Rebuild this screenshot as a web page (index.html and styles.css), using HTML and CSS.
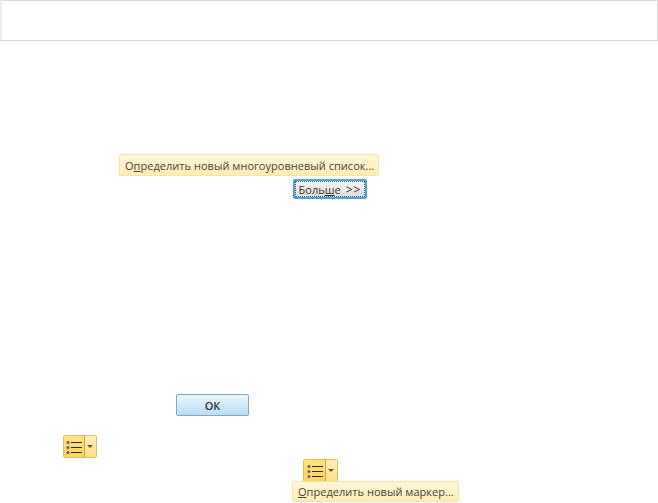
FILE: index.html
```html
<!DOCTYPE html>
<html lang="ru">
<head>
<meta charset="utf-8">
<title>Списки</title>
<link rel="stylesheet" href="styles.css">
</head>
<body>
<div class="banner"></div>
<div class="item menu menu-list"><span>О<u>п</u>ределить новый многоуровневый список...</span></div>
<button class="item btn btn-more"><span>Боль<u>ш</u>е</span><span class="chev">&gt;&gt;</span></button>
<button class="item btn btn-ok">ОК</button>
<div class="item split split-a">
  <span class="split-main"><svg width="16" height="14" viewBox="0 0 16 14"><g fill="#5a6478"><circle cx="2" cy="2.5" r="1.5"/><circle cx="2" cy="7.5" r="1.5"/><circle cx="2" cy="12.5" r="1.5"/></g><g fill="#2a2a2a"><rect x="5" y="2" width="11" height="1"/><rect x="5" y="7" width="11" height="1"/><rect x="5" y="12" width="11" height="1"/></g></svg></span>
  <span class="split-arrow"></span>
</div>
<div class="item split split-b">
  <span class="split-main"><svg width="16" height="14" viewBox="0 0 16 14"><g fill="#5a6478"><circle cx="2" cy="2.5" r="1.5"/><circle cx="2" cy="7.5" r="1.5"/><circle cx="2" cy="12.5" r="1.5"/></g><g fill="#2a2a2a"><rect x="5" y="2" width="11" height="1"/><rect x="5" y="7" width="11" height="1"/><rect x="5" y="12" width="11" height="1"/></g></svg></span>
  <span class="split-arrow"></span>
</div>
<div class="item menu menu-marker"><span><u>О</u>пределить новый маркер...</span></div>
</body>
</html>
```
FILE: styles.css
```css
html, body { margin: 0; padding: 0; background: #fff; }
body { position: relative; width: 658px; height: 503px; overflow: hidden; font-family: "Open Sans", "Noto Sans", sans-serif; color: #444; }
.banner { box-sizing: border-box; height: 41px; border-top: 1px solid #dcdcdc; border-bottom: 1px solid #d8d8d8; border-left: 2px solid #ececec; border-right: 1px solid #dcdcdc; }
.item { position: absolute; box-sizing: border-box; }
.menu { display: flex; align-items: center; border: 1px solid #f4e2ac; border-radius: 2px; background: linear-gradient(#fff7d6, #ffeeb4); font-size: 11px; font-weight: 500; letter-spacing: 0.03px; white-space: nowrap; }
.menu-list { left: 119px; top: 154px; width: 260px; height: 22px; padding-left: 5px; }
.menu-marker { left: 292px; top: 481px; width: 167px; height: 21px; padding-left: 5px; }
.btn { display: flex; align-items: center; justify-content: center; gap: 5px; padding: 0; font-family: inherit; font-size: 11px; color: #333; border-radius: 2px; }
.chev { font-size: 12px; letter-spacing: 1px; }
.btn-more { left: 293px; top: 179px; width: 74px; height: 20px; border: 2px solid #4aa4d6; outline: 1px dotted #555; outline-offset: -3px; background: linear-gradient(#f4f4f4, #dedede); font-weight: 500; }
.btn-ok { left: 176px; top: 394px; width: 73px; height: 22px; border: 1px solid #8aa6bc; background: linear-gradient(#eaf6fd, #b8def6); font-weight: 600; color: #333; }
.split { display: flex; height: 23px; border: 1px solid #dcbc68; border-radius: 2px; background: #ffe27a; }
.split-a { left: 63px; top: 435px; width: 34px; }
.split-b { left: 303px; top: 459px; width: 35px; }
.split-main { flex: 1; display: flex; align-items: center; justify-content: center; background: linear-gradient(#ffe27c, #ffd35c); border-right: 1px solid #c9a44e; }
.split-arrow { width: 11px; position: relative; background: linear-gradient(#fff0b4, #ffe084); }
.split-arrow::after { content: ""; position: absolute; left: 2px; top: 9px; border: 3px solid transparent; border-top: 3px solid #555; }
```
